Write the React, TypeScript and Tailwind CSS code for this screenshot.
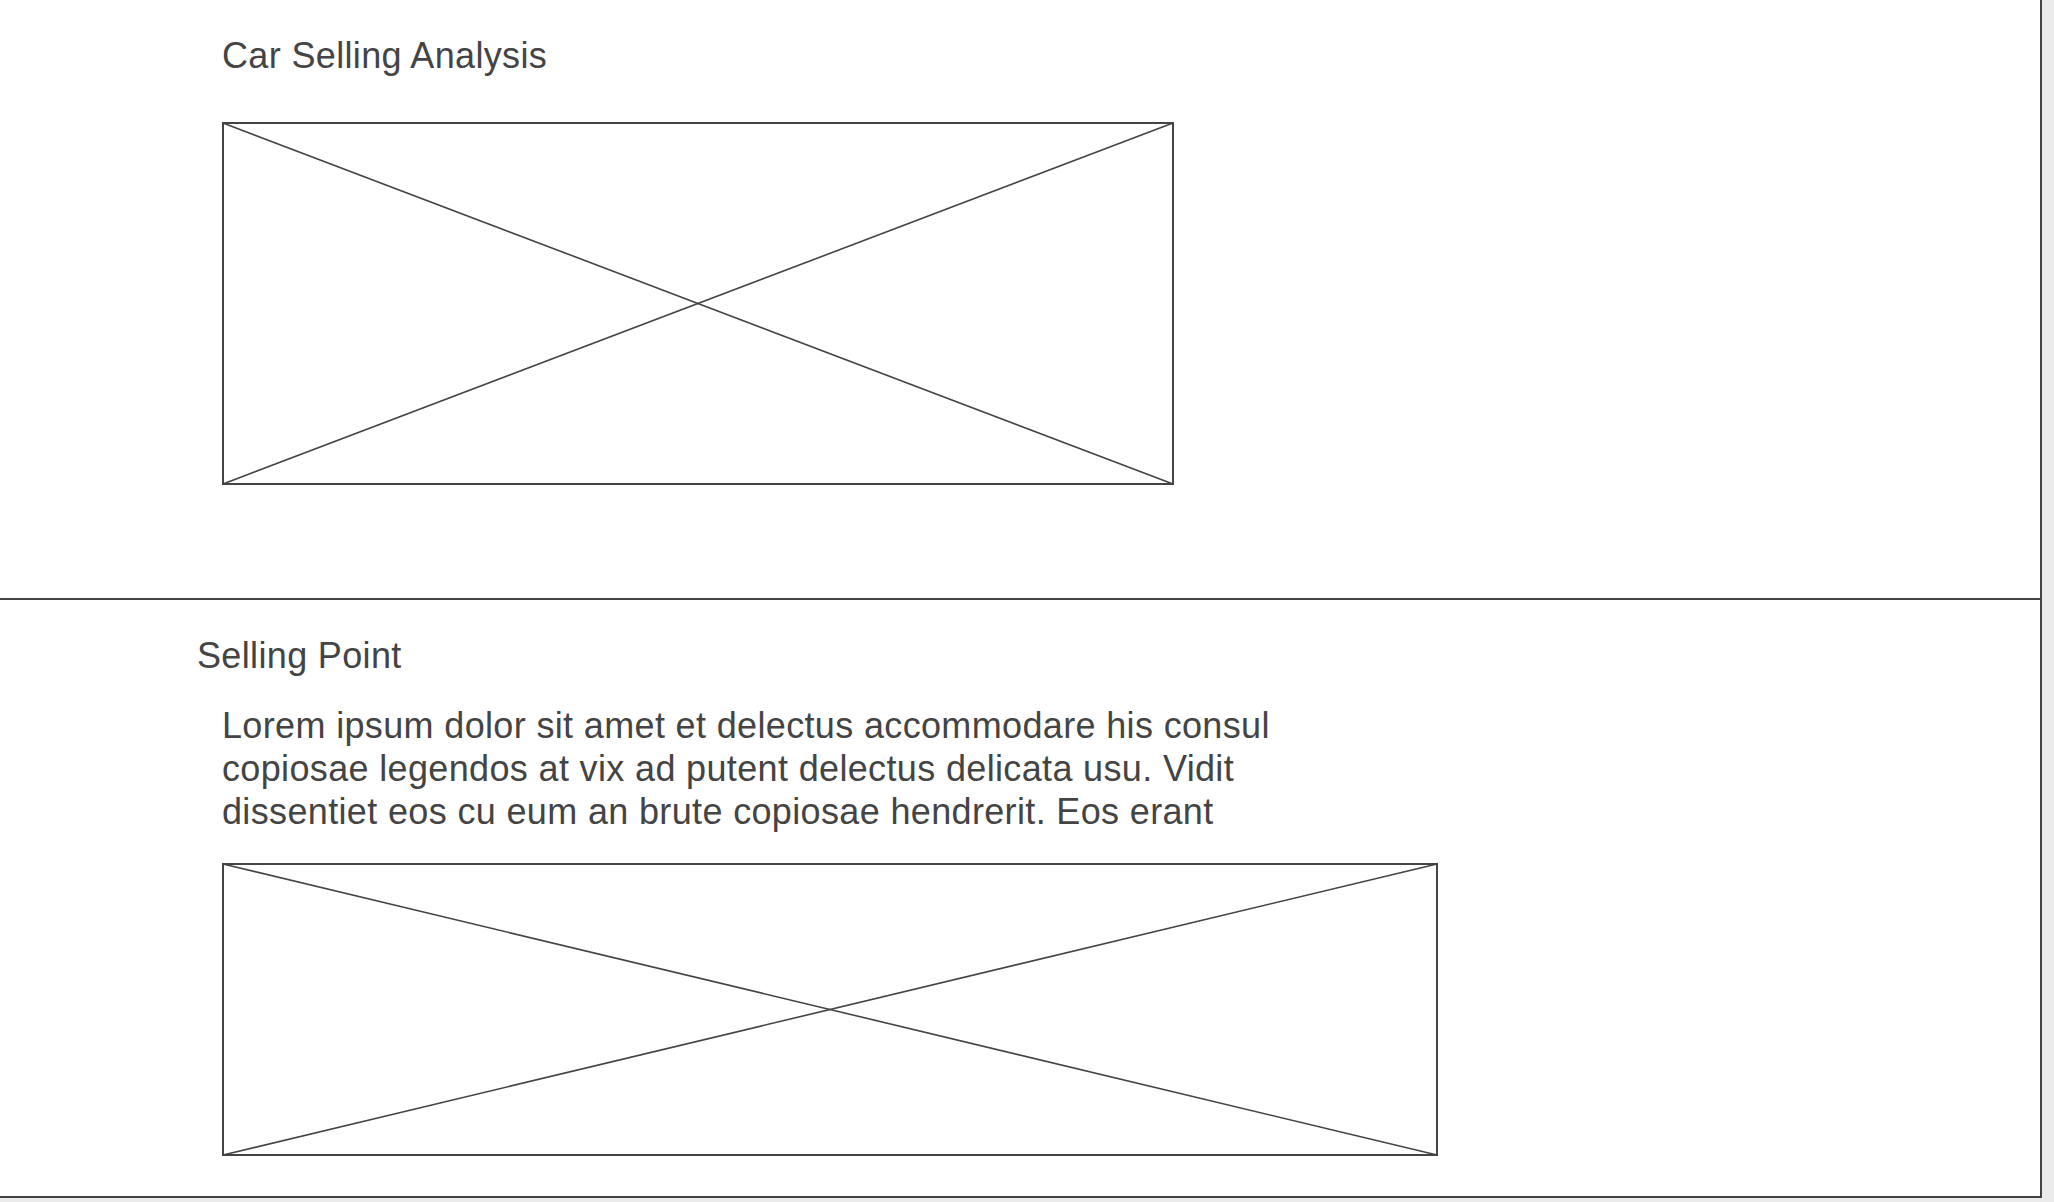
const INK = '#444444'

/** Wireframe image placeholder: a framed box crossed corner to corner. */
function Placeholder({ w, h }: { w: number; h: number }) {
  return (
    <svg width={w} height={h} viewBox={`0 0 ${w} ${h}`} className="block shrink-0">
      <rect x={1} y={1} width={w - 2} height={h - 2} fill="white" stroke={INK} strokeWidth={2} />
      <line x1={1} y1={1} x2={w - 1} y2={h - 1} stroke={INK} strokeWidth={1.6} />
      <line x1={1} y1={h - 1} x2={w - 1} y2={1} stroke={INK} strokeWidth={1.6} />
    </svg>
  )
}

export default function App() {
  return (
    <div
      className="h-[1202px] w-full overflow-hidden bg-[#ebebeb] text-[#444444]"
      style={{ fontFamily: '"Liberation Sans", Arial, sans-serif' }}
    >
      <div className="flex h-[1198px] w-[2042px] flex-col border-r-2 border-b-2 border-[#444444] bg-white">
        <section className="h-[600px] shrink-0 border-b-2 border-[#444444] pt-[38px]">
          <h1 className="pl-[222px] text-[36px] leading-none tracking-[0.35px]">Car Selling Analysis</h1>
          <div className="mt-[48px] pl-[222px]">
            <Placeholder w={952} h={363} />
          </div>
        </section>

        <section className="pt-[38px]">
          <h2 className="pl-[197px] text-[36px] leading-none tracking-[0.35px]">Selling Point</h2>
          <p className="mt-[30px] pl-[222px] text-[36px] leading-[43px] tracking-[0.35px]">
            <span className="block">Lorem ipsum dolor sit amet et delectus accommodare his consul</span>
            <span className="block">copiosae legendos at vix ad putent delectus delicata usu. Vidit</span>
            <span className="block">dissentiet eos cu eum an brute copiosae hendrerit. Eos erant</span>
          </p>
          <div className="mt-[30px] pl-[222px]">
            <Placeholder w={1216} h={293} />
          </div>
        </section>
      </div>
    </div>
  )
}
